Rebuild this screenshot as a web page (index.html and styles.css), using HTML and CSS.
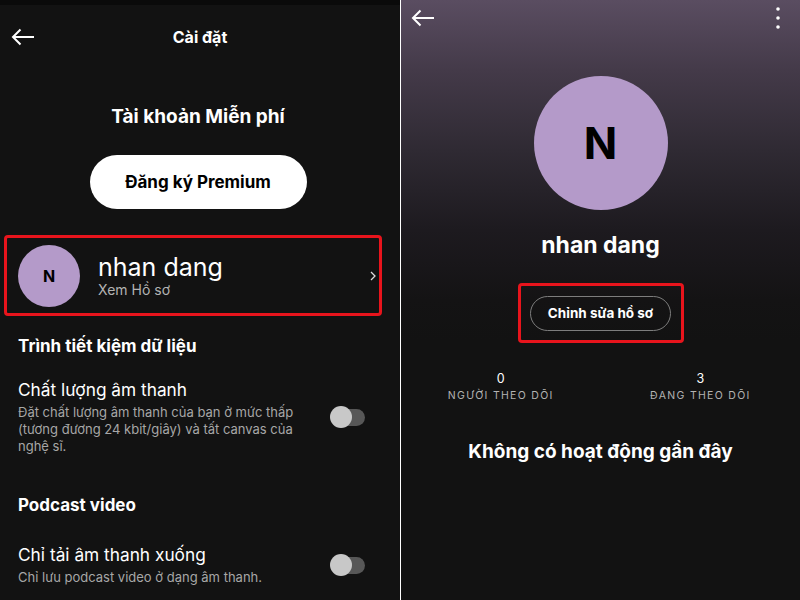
FILE: index.html
```html
<!DOCTYPE html>
<html lang="vi">
<head>
    <meta charset="UTF-8">
    <meta name="viewport" content="width=device-width, initial-scale=1.0">
    <title>Cài đặt - Hồ sơ</title>
    <link rel="stylesheet" href="styles.css">
</head>
<body>
    <div class="screens">
        <!-- Màn hình cài đặt -->
        <section class="screen settings">
            <div class="status-strip"></div>
            <header class="topbar">
                <svg class="icon-back" width="24" height="18" viewBox="0 0 24 18">
                    <path d="M23 9H2M9.5 1.5L2 9l7.5 7.5" fill="none" stroke="#fff" stroke-width="2"/>
                </svg>
                <h1 class="topbar-title">Cài đặt</h1>
            </header>

            <div class="plan">
                <h2 class="plan-name">Tài khoản Miễn phí</h2>
                <a class="btn-premium" href="#">Đăng ký Premium</a>
            </div>

            <a class="profile-row highlight" href="#">
                <span class="avatar avatar-sm">N</span>
                <span class="profile-text">
                    <span class="profile-name">nhan dang</span>
                    <span class="profile-link">Xem Hồ sơ</span>
                </span>
                <svg class="chevron" width="6" height="10" viewBox="0 0 6 10">
                    <path d="M1 1l4 4-4 4" fill="none" stroke="#ddd" stroke-width="1.3"/>
                </svg>
            </a>

            <h3 class="group-title">Trình tiết kiệm dữ liệu</h3>
            <div class="setting">
                <div class="setting-text">
                    <div class="setting-name">Chất lượng âm thanh</div>
                    <p class="setting-desc">Đặt chất lượng âm thanh của bạn ở mức thấp (tương đương 24 kbit/giây) và tất canvas của nghệ sĩ.</p>
                </div>
                <span class="switch"></span>
            </div>

            <h3 class="group-title group-title-podcast">Podcast video</h3>
            <div class="setting">
                <div class="setting-text">
                    <div class="setting-name">Chỉ tải âm thanh xuống</div>
                    <p class="setting-desc">Chỉ lưu podcast video ở dạng âm thanh.</p>
                </div>
                <span class="switch"></span>
            </div>
        </section>

        <div class="divider"></div>

        <!-- Màn hình hồ sơ -->
        <section class="screen profile">
            <header class="profile-bar">
                <svg class="icon-back" width="24" height="18" viewBox="0 0 24 18">
                    <path d="M23 9H2M9.5 1.5L2 9l7.5 7.5" fill="none" stroke="#fff" stroke-width="2"/>
                </svg>
                <svg class="icon-more" width="6" height="24" viewBox="0 0 6 24">
                    <circle cx="3" cy="3" r="1.8" fill="#fff"/>
                    <circle cx="3" cy="12" r="1.8" fill="#fff"/>
                    <circle cx="3" cy="21" r="1.8" fill="#fff"/>
                </svg>
            </header>

            <div class="avatar avatar-lg">N</div>
            <h2 class="user-name">nhan dang</h2>

            <div class="edit-wrap highlight">
                <a class="btn-edit" href="#">Chỉnh sửa hồ sơ</a>
            </div>

            <div class="stats">
                <div class="stat">
                    <span class="stat-num">0</span>
                    <span class="stat-label">NGƯỜI THEO DÕI</span>
                </div>
                <div class="stat">
                    <span class="stat-num">3</span>
                    <span class="stat-label">ĐANG THEO DÕI</span>
                </div>
            </div>

            <p class="empty-note">Không có hoạt động gần đây</p>
        </section>
    </div>
</body>
</html>
```

FILE: styles.css
```css
* {
    box-sizing: border-box;
    margin: 0;
    padding: 0;
}

body {
    font-family: Inter, "Noto Sans", sans-serif;
    background-color: #121212;
    color: #fff;
    width: 800px;
    height: 600px;
    overflow: hidden;
}

a {
    color: inherit;
    text-decoration: none;
}

.screens {
    display: flex;
    height: 600px;
}

.screen {
    display: flex;
    flex-direction: column;
    height: 600px;
    overflow: hidden;
}

.divider {
    width: 1px;
    background-color: #fff;
}

/* ---- Cài đặt ---- */
.settings {
    width: 400px;
    background-color: #121212;
}

.status-strip {
    height: 5px;
    background-color: #0a0a0a;
}

.topbar {
    display: grid;
    grid-template-columns: 44px 1fr 44px;
    align-items: center;
    height: 64px;
    padding: 0 11px;
}

.topbar-title {
    font-size: 16px;
    font-weight: 700;
    text-align: center;
}

.plan {
    display: flex;
    flex-direction: column;
    align-items: center;
    padding-right: 4px;
    margin-top: 36px;
}

.plan-name {
    font-size: 19px;
    font-weight: 700;
    line-height: 24px;
}

.btn-premium {
    display: flex;
    align-items: center;
    justify-content: center;
    width: 217px;
    height: 54px;
    margin-top: 26px;
    border-radius: 27px;
    background-color: #fff;
    color: #000;
    font-size: 17px;
    font-weight: 700;
}

/* khung đỏ đánh dấu */
.highlight {
    border: 3px solid #e8141c;
    border-radius: 4px;
}

.profile-row {
    display: flex;
    align-items: center;
    height: 81px;
    margin: 26px 18px 0 4px;
    padding: 0 3px 0 11px;
}

.avatar {
    display: flex;
    align-items: center;
    justify-content: center;
    border-radius: 50%;
    background-color: #b49ac9;
    color: #000;
    font-weight: 700;
    flex-shrink: 0;
}

.avatar-sm {
    width: 62px;
    height: 62px;
    font-size: 16px;
}

.profile-text {
    display: flex;
    flex-direction: column;
    margin-left: 18px;
}

.profile-name {
    font-size: 25px;
    line-height: 28px;
}

.profile-link {
    font-size: 14px;
    line-height: 18px;
    color: #b3b3b3;
}

.chevron {
    margin-left: auto;
}

.group-title {
    font-size: 17px;
    font-weight: 700;
    line-height: 22px;
    margin: 19px 18px 0;
}

.group-title-podcast {
    margin-top: 39px;
}

.setting {
    display: flex;
    align-items: center;
    justify-content: space-between;
    margin: 22px 18px 0;
    padding-right: 17px;
}

.group-title-podcast + .setting {
    margin-top: 28px;
}

.setting-text {
    width: 300px;
}

.setting-name {
    font-size: 17.3px;
    line-height: 22px;
}

.setting-desc {
    margin-top: 3px;
    font-size: 13px;
    line-height: 17px;
    color: #a7a7a7;
}

.switch {
    position: relative;
    width: 35px;
    height: 22px;
}

.switch::before {
    content: "";
    position: absolute;
    left: 4px;
    right: 0;
    top: 2.5px;
    height: 17px;
    border-radius: 9px;
    background-color: #575757;
}

.switch::after {
    content: "";
    position: absolute;
    left: 0;
    top: 0;
    width: 22px;
    height: 22px;
    border-radius: 50%;
    background-color: #c8c8c8;
}

/* ---- Hồ sơ ---- */
.profile {
    width: 399px;
    align-items: center;
    background: linear-gradient(180deg, #5a4d61 0px, #443a49 70px, #2f2a33 150px, #1d1a1f 230px, #141314 300px, #121212 340px);
}

.profile-bar {
    display: flex;
    align-items: center;
    justify-content: space-between;
    align-self: stretch;
    height: 36px;
    padding: 0 19px 0 10px;
}

.avatar-lg {
    width: 134px;
    height: 134px;
    margin-top: 40px;
    font-size: 44px;
}

.user-name {
    margin-top: 21px;
    font-size: 23px;
    font-weight: 700;
    line-height: 28px;
}

.edit-wrap {
    display: flex;
    align-items: center;
    justify-content: center;
    width: 166px;
    height: 60px;
    margin-top: 24px;
}

.btn-edit {
    display: flex;
    align-items: center;
    justify-content: center;
    width: 141px;
    height: 35px;
    border: 1px solid #7d7d7d;
    border-radius: 18px;
    font-size: 13.5px;
    font-weight: 700;
}

.stats {
    display: grid;
    grid-template-columns: 1fr 1fr;
    align-self: stretch;
    margin-top: 28px;
}

.stat {
    display: flex;
    flex-direction: column;
    align-items: center;
}

.stat-num {
    font-size: 12.5px;
    line-height: 16px;
}

.stat-label {
    margin-top: 2px;
    font-size: 10.5px;
    line-height: 14px;
    letter-spacing: 1.3px;
    color: #b3b3b3;
}

.empty-note {
    margin-top: 37px;
    font-size: 19px;
    font-weight: 700;
    line-height: 24px;
}
```
